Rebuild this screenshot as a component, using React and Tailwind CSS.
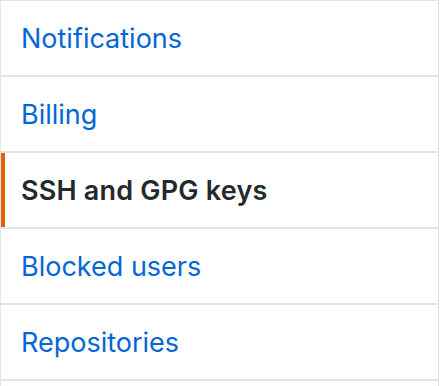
const ITEMS = [
  { label: 'Notifications' },
  { label: 'Billing' },
  { label: 'SSH and GPG keys', selected: true },
  { label: 'Blocked users' },
  { label: 'Repositories' },
];

export default function App() {
  return (
    <div className="w-[440px] h-[386px] overflow-hidden bg-white" style={{ fontFamily: 'Inter, "Liberation Sans", sans-serif' }}>
      <nav className="w-[439px] h-[400px] border-t border-l border-r border-[#e1e4e8] flex flex-col">
        {ITEMS.map(item => (
          <a
            key={item.label}
            href="#"
            className={
              item.selected
                ? 'h-[76px] shrink-0 flex items-center pl-[20px] pt-[3px] border-b-2 border-[#e1e4e8] text-[27px] font-semibold tracking-[0.2px] text-[#24292e] shadow-[inset_4px_0_0_#e36209]'
                : 'h-[76px] shrink-0 flex items-center pl-[20px] pt-[3px] border-b-2 border-[#e1e4e8] text-[27px] text-[#0366d6]'
            }
          >
            {item.label}
          </a>
        ))}
      </nav>
    </div>
  );
}
